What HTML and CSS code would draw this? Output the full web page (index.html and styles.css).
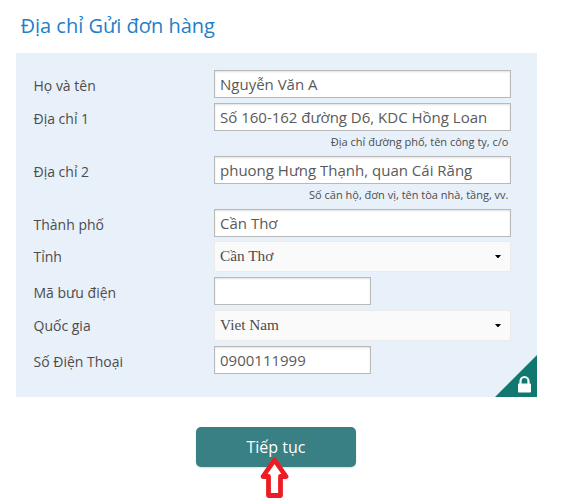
FILE: index.html
```html
<!DOCTYPE html>
<html lang="vi">
<head>
<meta charset="utf-8">
<title>Địa chỉ Gửi đơn hàng</title>
<link rel="stylesheet" href="styles.css">
</head>
<body>
<h1 class="title">Địa chỉ Gửi đơn hàng</h1>
<form class="panel">
  <div class="row"><label class="label" for="name">Họ và tên</label><input class="field" id="name" value="Nguyễn Văn A"></div>
  <div class="row"><label class="label" for="a1">Địa chỉ 1</label><input class="field" id="a1" value="Số 160-162 đường D6, KDC Hồng Loan"><p class="hint">Địa chỉ đường phố, tên công ty, c/o</p></div>
  <div class="row"><label class="label" for="a2">Địa chỉ 2</label><input class="field" id="a2" value="phuong Hưng Thạnh, quan Cái Răng"><p class="hint">Số căn hộ, đơn vị, tên tòa nhà, tầng, vv.</p></div>
  <div class="row tight"><label class="label" for="city">Thành phố</label><input class="field" id="city" value="Cần Thơ"></div>
  <div class="row"><label class="label">Tỉnh</label><div class="select"><span>Cần Thơ</span><svg class="caret" viewBox="0 0 6 3"><path d="M0 0h6L3.5 3h-1z"/></svg></div></div>
  <div class="row"><label class="label" for="zip">Mã bưu điện</label><input class="field short" id="zip" value=""></div>
  <div class="row"><label class="label">Quốc gia</label><div class="select"><span>Viet Nam</span><svg class="caret" viewBox="0 0 6 3"><path d="M0 0h6L3.5 3h-1z"/></svg></div></div>
  <div class="row"><label class="label" for="tel">Số Điện Thoại</label><input class="field short" id="tel" value="0900111999"></div>
  <svg class="secure" viewBox="0 0 42 42">
    <path d="M42 0v42H0z" fill="#10786e"/>
    <path d="M25.500 29v-2.800a4 4.200 0 0 1 8 0V29" fill="none" stroke="#fff" stroke-width="2.200"/>
    <rect x="23" y="28.500" width="13" height="9" rx=".8" fill="#fff"/>
  </svg>
</form>
<div class="actions">
  <button class="submit" type="button">Tiếp tục</button>
  <svg class="pointer" viewBox="0 0 30 42">
    <path d="M14.500 3L26 19.500H20.500V38.500H8.500V19.500H3z" fill="#fff" stroke="#ed1c24" stroke-width="4.800" stroke-linejoin="round"/>
  </svg>
</div>
</body>
</html>
```
FILE: styles.css
```css
* { box-sizing: border-box; }
body {
  margin: 0;
  padding: 11px 0 0 16px;
  height: 499px;
  overflow: hidden;
  background: #fff;
  color: #4c4c4c;
  font-family: "Open Sans", "Noto Sans", sans-serif;
}
.title {
  margin: 0 0 12px 4.500px;
  font-size: 20px;
  line-height: 30px;
  font-weight: 400;
  color: #1e7fc8;
}
.panel {
  position: relative;
  width: 521px;
  height: 344px;
  padding: 17px 26px 0 17.500px;
  background: #e8f0fa;
}
.row {
  display: grid;
  grid-template-columns: 180.500px 297px;
  margin-bottom: 5px;
}
.row.tight { margin-bottom: 4px; }
.label {
  padding-top: 6px;
  height: 26px;
  font-size: 14px;
  line-height: 20px;
}
.field {
  width: 297px;
  height: 28px;
  margin: 0;
  padding: 0 5px 1px;
  border: 1px solid #b9b9b9;
  border-radius: 0;
  background: #fff;
  box-shadow: inset 0 1px 2px rgba(0, 0, 0, .12);
  color: #5a5a5a;
  font: 400 15px "Open Sans", "Noto Sans", sans-serif;
}
.field.short { width: 157px; }
.hint {
  grid-column: 2;
  margin: 0;
  padding: 2px 2.500px 0 0;
  height: 20px;
  font-size: 11px;
  line-height: 18px;
  text-align: right;
}
.select {
  display: flex;
  align-items: center;
  justify-content: space-between;
  height: 31px;
  padding: 0 9px 1px 5px;
  border: 1px solid #ebebeb;
  background: #fafafa;
  font: 15.300px "Liberation Serif", serif;
}
.select span { margin-bottom: 1px; }
.caret { width: 6px; height: 3px; fill: #000; }
.secure {
  position: absolute;
  right: 0;
  bottom: 0;
  width: 42px;
  height: 42px;
}
.actions {
  position: relative;
  width: 160px;
  margin: 30px 0 0 180px;
}
.submit {
  display: block;
  width: 160px;
  height: 40px;
  padding: 0;
  border: 0;
  border-radius: 5px;
  background: #388083;
  box-shadow: 0 1px 2px rgba(0, 0, 0, .15);
  color: #fff;
  font: 400 16px "Open Sans", "Noto Sans", sans-serif;
}
.pointer {
  position: absolute;
  left: 64px;
  top: 30px;
  width: 30px;
  height: 42px;
}
```
